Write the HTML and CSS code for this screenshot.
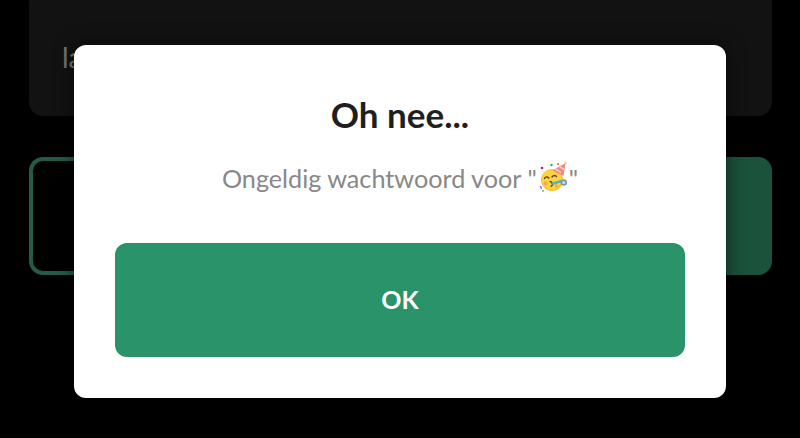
FILE: index.html
```html
<!DOCTYPE html>
<html lang="nl">
<head>
<meta charset="utf-8">
<title>Oh nee...</title>
<link rel="stylesheet" href="styles.css">
</head>
<body>
<main class="page">
  <div class="field"><span class="field-text">labc</span></div>
  <div class="actions">
    <div class="action action-outline"></div>
    <div class="action action-solid"></div>
  </div>
</main>
<div class="dialog" role="alertdialog">
  <h1 class="dialog-title">Oh nee...</h1>
  <p class="dialog-text">Ongeldig wachtwoord voor "<svg class="emoji" viewBox="0 0 32 32" aria-hidden="true">
      <circle cx="15" cy="19" r="11" fill="#fbc02d"/>
      <circle cx="14.6" cy="18.4" r="10" fill="#fdd43f"/>
      <path d="M15.5 9.5 L28.5 2 L26.5 15 Z" fill="#f08a86"/>
      <path d="M18.5 8 L24 11.5 M22.5 5.6 L27 8.5" stroke="#fbdcd0" stroke-width="1.2" fill="none"/>
      <circle cx="28.5" cy="2.2" r="1.4" fill="#f6c9b8"/>
      <path d="M7.5 17.5 Q9.5 14.5 11.8 17 M15 16 Q17 13.5 19.5 15.5" stroke="#5d4037" stroke-width="1.4" fill="none" stroke-linecap="round"/>
      <path d="M13 20.5 Q16 21.3 15 22.7 Q16.6 23.6 14 25.3" stroke="#5d4037" stroke-width="1.3" fill="none" stroke-linecap="round"/>
      <path d="M16 22.5 L25 20" stroke="#4db6c6" stroke-width="2.6" stroke-linecap="round"/>
      <circle cx="26.8" cy="21.5" r="3.3" fill="#7f9aa3"/>
      <circle cx="26.8" cy="21.5" r="1.6" fill="#c5dde3"/>
      <circle cx="8.5" cy="22.5" r="2" fill="#f7a94a"/>
      <circle cx="19.5" cy="25" r="1.8" fill="#f7a94a"/>
      <circle cx="5" cy="7" r="1.3" fill="#c2188b"/>
      <circle cx="14.5" cy="4" r="1.2" fill="#26a69a"/>
      <circle cx="21" cy="3" r="1" fill="#ef5350"/>
      <path d="M3.5 25 L4.5 28" stroke="#5c6bc0" stroke-width="1.2"/>
      <circle cx="6" cy="30" r="0.9" fill="#66bb6a"/>
    </svg>"</p>
  <button class="dialog-button" type="button">OK</button>
</div>
</body>
</html>
```

FILE: styles.css
```css
* { box-sizing: border-box; }

html, body {
  margin: 0;
  height: 100%;
  background: #000;
  overflow: hidden;
  font-family: "Lato", "Liberation Sans", sans-serif;
}

.page {
  display: flex;
  flex-direction: column;
  gap: 41px;
  margin-top: -10px;
  padding: 0 28px 0 29px;
}

.field {
  display: flex;
  align-items: center;
  height: 126px;
  padding: 8px 33px 0;
  background: #121212;
  border-radius: 14px;
}

.field-text {
  font-size: 28px;
  color: #767676;
}

.actions {
  display: flex;
  justify-content: space-between;
  gap: 24px;
}

.action {
  flex: 1;
  height: 118px;
  border-radius: 14px;
}

.action-outline {
  border: 4px solid #235b46;
}

.action-solid {
  background: #1b523c;
}

.dialog {
  position: absolute;
  left: 74px;
  top: 45px;
  width: 652px;
  height: 353px;
  display: flex;
  flex-direction: column;
  align-items: center;
  padding: 48px 41px 41px;
  background: #fff;
  border-radius: 12px;
  box-shadow: 0 0 20px rgba(0, 0, 0, 0.55);
}

.dialog-title {
  margin: 0;
  font-size: 35px;
  line-height: 42px;
  font-weight: 700;
  color: #1f1f1f;
}

.dialog-text {
  display: flex;
  align-items: center;
  margin: 24px 0 0;
  height: 38px;
  font-size: 25.2px;
  color: #888;
}

.emoji {
  width: 32px;
  height: 32px;
  margin-top: -2px;
}

.dialog-button {
  width: 570px;
  height: 114px;
  margin-top: auto;
  padding: 0 0 2px;
  border: 0;
  border-radius: 12px;
  background: #2a9369;
  color: #fff;
  font-family: inherit;
  font-size: 25px;
  font-weight: 700;
}
```
